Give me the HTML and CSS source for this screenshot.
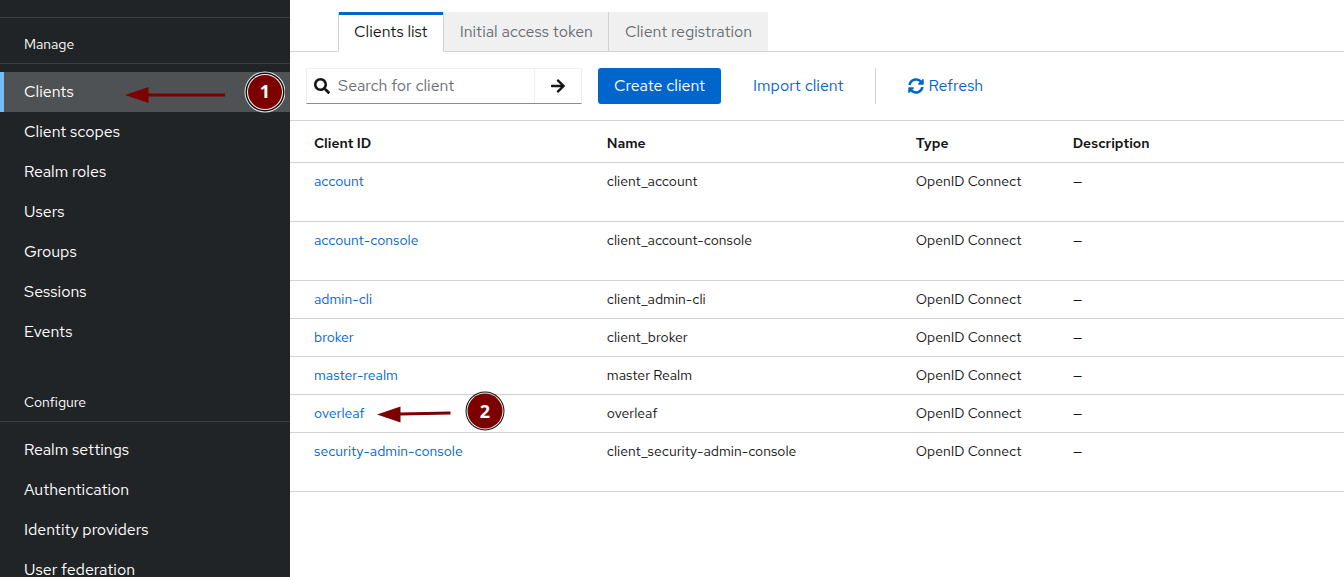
FILE: index.html
```html
<!DOCTYPE html>
<html lang="en">
<head>
<meta charset="utf-8">
<meta name="viewport" content="width=device-width, initial-scale=1">
<title>Clients</title>
<link rel="stylesheet" href="styles.css">
</head>
<body>
<div class="page">
  <nav class="sidebar" aria-label="Main navigation">
    <section class="nav-section">
      <h2 class="nav-title">Manage</h2>
      <ul class="nav-list">
        <li><a class="nav-link nav-link-current" href="#clients" aria-current="page">Clients
          <svg class="mark mark-clients" width="160" height="42" viewBox="0 0 160 42" aria-hidden="true">
            <path d="M0 24 23.500 16v16z" fill="#7d0000"/>
            <path d="M23 24h77" stroke="#7d0000" stroke-width="3"/>
            <circle cx="140" cy="21" r="20.500" fill="#e8e8e8"/>
            <circle cx="140" cy="21" r="19.500" fill="#111"/>
            <circle cx="140" cy="21" r="18" fill="#f4f4f4"/>
            <circle cx="140" cy="21" r="17" fill="#7d0000"/>
            <text class="mark-number" x="140" y="27">1</text>
          </svg></a></li>
        <li><a class="nav-link" href="#client-scopes">Client scopes</a></li>
        <li><a class="nav-link" href="#realm-roles">Realm roles</a></li>
        <li><a class="nav-link" href="#users">Users</a></li>
        <li><a class="nav-link" href="#groups">Groups</a></li>
        <li><a class="nav-link" href="#sessions">Sessions</a></li>
        <li><a class="nav-link" href="#events">Events</a></li>
      </ul>
    </section>
    <section class="nav-section">
      <h2 class="nav-title">Configure</h2>
      <ul class="nav-list">
        <li><a class="nav-link" href="#realm-settings">Realm settings</a></li>
        <li><a class="nav-link" href="#authentication">Authentication</a></li>
        <li><a class="nav-link" href="#identity-providers">Identity providers</a></li>
        <li><a class="nav-link" href="#user-federation">User federation</a></li>
      </ul>
    </section>
  </nav>

  <main class="content">
    <div class="tabs" role="tablist">
      <button class="tab tab-current" type="button" role="tab" aria-selected="true">Clients list</button>
      <button class="tab" type="button" role="tab" aria-selected="false">Initial access token</button>
      <button class="tab" type="button" role="tab" aria-selected="false">Client registration</button>
    </div>

    <div class="toolbar">
      <form class="search" role="search">
        <label class="search-label" for="search" aria-label="Search for client">
          <svg width="16" height="16" viewBox="0 0 512 512" fill="currentColor" aria-hidden="true"><path d="M505 442.700 405.300 343c-4.500-4.500-10.600-7-17-7H372c27.600-35.300 44-79.700 44-128C416 93.100 322.900 0 208 0S0 93.100 0 208s93.100 208 208 208c48.300 0 92.700-16.400 128-44v16.300c0 6.400 2.500 12.500 7 17l99.700 99.700c9.400 9.400 24.600 9.400 33.900 0l28.300-28.300c9.400-9.400 9.400-24.600.1-34zM208 336c-70.700 0-128-57.200-128-128 0-70.700 57.200-128 128-128 70.700 0 128 57.200 128 128 0 70.700-57.200 128-128 128z"/></svg>
        </label>
        <input class="search-input" id="search" type="text" placeholder="Search for client">
        <button class="search-button" type="button" aria-label="Search">
          <svg width="14" height="16" viewBox="0 0 448 512" fill="currentColor" aria-hidden="true"><path d="M190.500 66.900l22.200-22.200c9.400-9.400 24.600-9.400 33.900 0L441 239c9.400 9.400 9.400 24.600 0 33.900L246.600 467.300c-9.400 9.400-24.600 9.400-33.900 0l-22.200-22.200c-9.500-9.500-9.300-25 .4-34.300L311.400 296H24c-13.300 0-24-10.700-24-24v-32c0-13.300 10.700-24 24-24h287.400L190.900 101.200c-9.800-9.300-10-24.800-.4-34.300z"/></svg>
        </button>
      </form>
      <button class="button button-primary" type="button">Create client</button>
      <button class="button button-link" type="button">Import client</button>
      <div class="toolbar-refresh">
        <button class="button button-link" type="button">
          <svg width="16" height="16" viewBox="0 0 512 512" fill="currentColor" aria-hidden="true"><path d="M370.720 133.280C339.458 104.008 298.888 87.962 255.848 88c-77.458.068-144.328 53.178-162.791 126.850-1.344 5.363-6.122 9.150-11.651 9.150H24.103c-7.498 0-13.194-6.807-11.807-14.176C33.933 94.924 134.813 8 256 8c66.448 0 126.791 26.136 171.315 68.685L463.030 40.970C478.149 25.851 504 36.559 504 57.941V192c0 13.255-10.745 24-24 24H345.941c-21.382 0-32.090-25.851-16.971-40.971l41.750-41.749zM32 296h134.059c21.382 0 32.090 25.851 16.971 40.971l-41.750 41.750c31.262 29.273 71.835 45.319 114.876 45.280 77.418-.07 144.315-53.144 162.787-126.849 1.344-5.363 6.122-9.150 11.651-9.150h57.304c7.498 0 13.194 6.807 11.807 14.176C478.067 417.076 377.187 504 256 504c-66.448 0-126.791-26.136-171.315-68.685L48.970 471.030C33.851 486.149 8 475.441 8 454.059V320c0-13.255 10.745-24 24-24z"/></svg>
          Refresh</button>
      </div>
    </div>

    <table class="clients">
      <colgroup><col class="col-id"><col class="col-name"><col class="col-type"><col></colgroup>
      <thead>
        <tr><th scope="col">Client ID</th><th scope="col">Name</th><th scope="col">Type</th><th scope="col">Description</th></tr>
      </thead>
      <tbody>
        <tr class="row-tall"><td><a href="#account">account</a></td><td>client_account</td><td>OpenID Connect</td><td>—</td></tr>
        <tr class="row-tall"><td><a href="#account-console">account-console</a></td><td>client_account-console</td><td>OpenID Connect</td><td>—</td></tr>
        <tr><td><a href="#admin-cli">admin-cli</a></td><td>client_admin-cli</td><td>OpenID Connect</td><td>—</td></tr>
        <tr><td><a href="#broker">broker</a></td><td>client_broker</td><td>OpenID Connect</td><td>—</td></tr>
        <tr><td><a href="#master-realm">master-realm</a></td><td>master Realm</td><td>OpenID Connect</td><td>—</td></tr>
        <tr><td class="cell-marked"><a href="#overleaf">overleaf</a>
          <svg class="mark mark-overleaf" width="130" height="40" viewBox="0 0 130 40" aria-hidden="true">
            <path d="M0 23.500 23.500 15.500v16z" fill="#7d0000"/>
            <path d="M23 23 73.500 22" stroke="#7d0000" stroke-width="3"/>
            <circle cx="108" cy="20" r="19.500" fill="#111"/>
            <circle cx="108" cy="20" r="18.500" fill="#f4f4f4"/>
            <circle cx="108" cy="20" r="17.500" fill="#7d0000"/>
            <text class="mark-number" x="108" y="27">2</text>
          </svg></td><td>overleaf</td><td>OpenID Connect</td><td>—</td></tr>
        <tr class="row-tall"><td><a href="#security-admin-console">security-admin-console</a></td><td>client_security-admin-console</td><td>OpenID Connect</td><td>—</td></tr>
      </tbody>
    </table>
  </main>
</div>
</body>
</html>
```
FILE: styles.css
```css
* {
  box-sizing: border-box;
}

body {
  margin: 0;
  color: #151515;
  background: #fff;
  font-family: "Red Hat Text", Inter, "Open Sans", sans-serif;
  font-size: 16px;
  line-height: 24px;
}

button,
input {
  font: inherit;
}

svg {
  flex: none;
}

.page {
  display: flex;
  height: 100vh;
  overflow: hidden;
}

/* Sidebar */
.sidebar {
  flex: 0 0 290px;
  padding-top: 17px;
  overflow: hidden;
  background: #212427;
  color: #fff;
}

.nav-section:first-child {
  border-top: 1px solid #3c3f42;
}

.nav-section + .nav-section {
  margin-top: 24px;
}

.nav-title {
  margin: 0;
  padding: 16px 24px 8px;
  border-bottom: 1px solid #3c3f42;
  font-size: 14px;
  font-weight: 400;
  line-height: 21px;
}

.nav-list {
  margin: 8px 0 0;
  padding: 0;
  list-style: none;
}

.nav-link {
  display: block;
  position: relative;
  padding: 8px 24px;
  color: #fff;
  text-decoration: none;
}

.nav-link-current {
  background: #4f5255;
  box-shadow: inset 4px 0 #73bcf7;
}

/* Tabs */
.content {
  flex: 1;
  min-width: 0;
}

.tabs {
  display: flex;
  padding: 12px 48px 0;
  box-shadow: inset 0 -1px #d2d2d2;
}

.tab {
  padding: 8px 15px 7px 16px;
  border: 0 solid #d2d2d2;
  border-right-width: 1px;
  border-bottom-width: 1px;
  background: #f0f0f0;
  color: #6a6e73;
  line-height: 24px;
}

.tab:last-child {
  padding-right: 16px;
  border-right-width: 0;
}

.tab-current {
  padding-left: 15px;
  border-left-width: 1px;
  border-bottom-color: #fff;
  background: #fff;
  box-shadow: inset 0 3px #06c;
  color: #151515;
}

/* Toolbar */
.toolbar {
  display: flex;
  align-items: center;
  gap: 16px;
  padding: 16px;
}

.search {
  display: flex;
  width: 276px;
  height: 36px;
  border: 1px solid #f0f0f0;
  border-bottom-color: #8a8d90;
}

.search-label {
  display: flex;
  align-items: center;
  padding-left: 7px;
}

.search-input {
  flex: 1;
  min-width: 0;
  padding: 0 8px;
  border: 0;
  background: none;
  outline: 0;
}

.search-input::placeholder {
  color: #6a6e73;
  opacity: 1;
}

.search-button {
  display: flex;
  align-items: center;
  justify-content: center;
  width: 47px;
  padding: 0;
  border: 0;
  border-left: 1px solid #f0f0f0;
  background: none;
  color: #151515;
}

.button {
  display: flex;
  align-items: center;
  gap: 4px;
  padding: 6px 16px;
  border: 0;
  border-radius: 3px;
  white-space: nowrap;
}

.button-primary {
  background: #06c;
  color: #fff;
}

.button-link {
  background: none;
  color: #06c;
}

.toolbar-refresh {
  padding-left: 16px;
  border-left: 1px solid #d2d2d2;
}

/* Table */
.clients {
  width: 100%;
  border-top: 1px solid #d2d2d2;
  border-spacing: 0;
  table-layout: fixed;
  font-size: 14px;
  line-height: 21px;
}

.col-id,
.col-name {
  width: 29.3%;
}

.col-type {
  width: 14.9%;
}

.clients th,
.clients td {
  padding: 8px;
  border-bottom: 1px solid #d2d2d2;
  text-align: left;
  vertical-align: top;
}

.clients th {
  padding-top: 12px;
  font-weight: 600;
}

.clients th:first-child,
.clients td:first-child {
  padding-left: 24px;
}

.row-tall {
  height: 59px;
}

.clients a {
  color: #06c;
  text-decoration: none;
}

/* Numbered pointers drawn over the page */
.cell-marked {
  position: relative;
}

.mark {
  position: absolute;
}

.mark-clients {
  top: -1px;
  left: 125px;
}

.mark-overleaf {
  top: -4px;
  left: 87px;
}

.mark-number {
  fill: #fff;
  font: 700 18px "Open Sans", sans-serif;
  text-anchor: middle;
}
```
